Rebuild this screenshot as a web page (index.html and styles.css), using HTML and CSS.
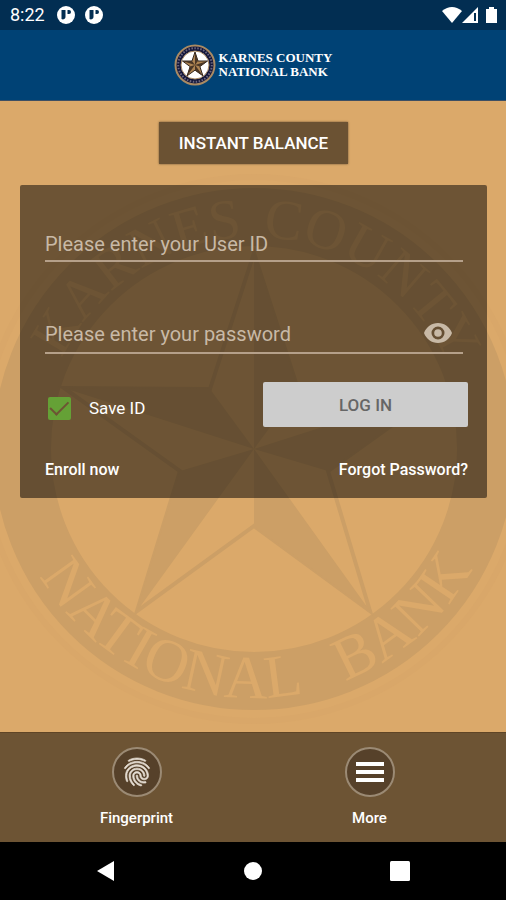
FILE: index.html
```html
<!DOCTYPE html>
<html lang="en">
<head>
<meta charset="utf-8">
<meta name="viewport" content="width=device-width, initial-scale=1">
<title>Karnes County National Bank</title>
<link rel="stylesheet" href="styles.css">
</head>
<body>
<div class="status">
  <div class="status-group">
    <span class="clock">8:22</span>
    <svg class="notice" viewBox="0 0 18 18" aria-hidden="true"><circle cx="9" cy="9" r="9" fill="#fff"/><path d="M4.500 4h4v6.500a2.600 2.600 0 0 1-4 2.500z" fill="#022e52"/><path d="M10.500 4h1.500a2 2 0 0 1 0 4h-1.500z" fill="#022e52"/></svg>
    <svg class="notice" viewBox="0 0 18 18" aria-hidden="true"><circle cx="9" cy="9" r="9" fill="#fff"/><path d="M4.500 4h4v6.500a2.600 2.600 0 0 1-4 2.500z" fill="#022e52"/><path d="M10.500 4h1.500a2 2 0 0 1 0 4h-1.500z" fill="#022e52"/></svg>
  </div>
  <svg class="signals" viewBox="0 0 56 18" aria-hidden="true" fill="#fff">
    <path d="M0 5Q10-3 20 5L10 17z"/>
    <path fill-rule="evenodd" d="M36 1v16H20zM32 7v8h2V7z"/>
    <path d="M47 1h5v2h3v14H44V3h3z"/>
  </svg>
</div>
<header class="header">
  <svg class="emblem" viewBox="0 0 42 42" aria-hidden="true">
    <circle cx="21" cy="21" r="19.500" fill="#14173a" stroke="#a98a63" stroke-width="2"/>
    <circle cx="21" cy="21" r="16.800" fill="none" stroke="#6b6780" stroke-width="2" stroke-dasharray="1.500 1.500"/>
    <circle cx="21" cy="21" r="14" fill="#fff" stroke="#a98a63"/>
    <path d="M21 8l3 9 9.500 0-7.600 5.600 3 9.200-7.900-5.600-7.900 5.600 3-9.200L8.500 17l9.500 0z" fill="#ad8452" stroke="#33271f"/>
    <path d="M21 8v13l3-4zM33.500 17L21 21l4.900 1.600zM28.900 31.800L21 21v5.200zM13.100 31.800L21 21l-4.900 1.600zM8.500 17L21 21l-3-4z" fill="#493626"/>
  </svg>
  <h1 class="brand">KARNES COUNTY<br>NATIONAL BANK</h1>
</header>
<main class="main">
  <svg class="seal" viewBox="0 0 506 631" preserveAspectRatio="xMidYMid slice" aria-hidden="true">
    <defs>
      <path id="arc-top" d="M42 348a212 212 0 0 1 424 0"/>
      <path id="arc-bottom" d="M5 348a249 249 0 0 0 498 0"/>
    </defs>
    <circle class="halo" cx="254" cy="348" r="272"/>
    <circle class="ring" cx="254" cy="348" r="232"/>
    <text class="seal-text" font-size="57"><textPath href="#arc-top" startOffset="14%">KARNES</textPath></text>
    <text class="seal-text seal-end" font-size="57"><textPath href="#arc-top" startOffset="87%">COUNTY</textPath></text>
    <text class="seal-text" font-size="61"><textPath href="#arc-bottom" startOffset="17%">NATIONAL</textPath></text>
    <text class="seal-text seal-end" font-size="61"><textPath href="#arc-bottom" startOffset="84%">BANK</textPath></text>
    <path class="star-line" d="M254 152L298 288L444 287L328 370L370 510L254 425L137 510L180 370L64 287L210 288Z"/>
    <path class="star-dark" d="M254 152V348L298 288zM444 287L254 348L328 370zM370 510L254 348V425zM137 510L254 348L180 370zM64 287L254 348L210 288z"/>
  </svg>
  <button class="instant" type="button">INSTANT BALANCE</button>
  <form class="card">
    <div class="field">
      <input class="text" id="user" type="text" aria-label="User ID" placeholder="Please enter your User ID">
    </div>
    <div class="field field-password">
      <input class="text" id="password" type="password" aria-label="Password" placeholder="Please enter your password">
      <button class="reveal" type="button" aria-label="Show password">
        <svg viewBox="0 0 28 20" aria-hidden="true"><path fill-rule="evenodd" d="M14 0C7.600 0 2.200 4 0 10c2.200 6 7.600 10 14 10s11.800-4 14-10C25.800 4 20.400 0 14 0zm0 16.500a6.500 6.500 0 1 1 0-13 6.500 6.500 0 0 1 0 13zm0-2.700a3.800 3.800 0 1 0 0-7.600 3.800 3.800 0 0 0 0 7.600z" fill="#c8b9a6"/></svg>
      </button>
    </div>
    <div class="actions">
      <label class="save"><input class="tick" type="checkbox" checked>Save ID</label>
      <button class="login" type="button">LOG IN</button>
    </div>
    <div class="links"><a href="#enroll">Enroll now</a><a href="#forgot">Forgot Password?</a></div>
  </form>
</main>
<nav class="tabs">
  <button class="tab" type="button">
    <span class="disc"><svg class="finger" viewBox="2 1.500 20 21" aria-hidden="true" fill="#e5ddd2" stroke="#e5ddd2" stroke-width=".5"><path d="M17.810 4.470c-.080 0-.160-.020-.230-.060C15.660 3.420 14 3 12.010 3c-1.980 0-3.860.470-5.570 1.410-.240.130-.540.040-.680-.200-.130-.240-.040-.550.200-.680C7.820 2.520 9.860 2 12.010 2c2.130 0 3.990.470 6.030 1.520.250.130.340.430.210.670-.090.180-.260.280-.440.280zM3.500 9.720c-.100 0-.200-.030-.290-.090-.230-.160-.280-.470-.120-.700.990-1.400 2.250-2.500 3.750-3.270C9.980 4.040 14 4.030 17.150 5.650c1.500.770 2.760 1.860 3.750 3.250.160.220.110.540-.120.700-.230.160-.540.110-.700-.120-.900-1.260-2.040-2.250-3.390-2.940-2.870-1.470-6.540-1.470-9.400.010-1.360.700-2.500 1.700-3.400 2.960-.080.140-.230.210-.390.210zm6.250 12.070c-.130 0-.260-.050-.350-.150-.870-.870-1.340-1.430-2.010-2.640-.690-1.230-1.050-2.730-1.050-4.340 0-2.970 2.540-5.390 5.660-5.390s5.660 2.420 5.660 5.390c0 .280-.220.500-.500.500s-.500-.220-.500-.500c0-2.420-2.090-4.390-4.660-4.390s-4.660 1.970-4.660 4.390c0 1.440.320 2.770.930 3.850.640 1.150 1.080 1.640 1.850 2.420.190.200.190.510 0 .710-.110.100-.240.150-.370.150zm7.170-1.850c-1.190 0-2.240-.300-3.100-.890-1.490-1.010-2.380-2.650-2.380-4.390 0-.280.220-.500.500-.500s.500.220.500.500c0 1.410.720 2.740 1.940 3.560.710.480 1.540.710 2.540.710.240 0 .640-.030 1.040-.100.270-.050.530.130.580.410.050.270-.130.530-.410.580-.570.110-1.070.120-1.210.120zM14.910 22c-.040 0-.090-.010-.130-.020-1.590-.440-2.630-1.030-3.720-2.100-1.400-1.390-2.170-3.240-2.170-5.220 0-1.620 1.380-2.940 3.080-2.940s3.080 1.320 3.080 2.940c0 1.070.930 1.940 2.080 1.940s2.080-.870 2.080-1.940c0-3.770-3.250-6.830-7.250-6.830-2.840 0-5.440 1.580-6.610 4.030-.390.810-.590 1.760-.590 2.800 0 .780.070 2.010.670 3.610.100.260-.030.550-.290.640-.260.100-.550-.040-.640-.290-.490-1.310-.730-2.610-.730-3.960 0-1.200.230-2.290.680-3.240 1.330-2.790 4.280-4.600 7.510-4.600 4.550 0 8.250 3.510 8.250 7.830 0 1.620-1.380 2.940-3.080 2.940s-3.080-1.320-3.080-2.940c0-1.070-.930-1.940-2.080-1.940s-2.080.870-2.080 1.940c0 1.710.660 3.310 1.870 4.510.950.940 1.860 1.460 3.270 1.850.270.070.420.350.350.610-.050.230-.260.380-.470.380z"/></svg></span>
    Fingerprint
  </button>
  <button class="tab" type="button">
    <span class="disc"><svg class="menu" viewBox="0 0 28 20" aria-hidden="true" fill="#fff"><path d="M0 0h28v4H0zM0 8h28v4H0zM0 16h28v4H0z"/></svg></span>
    More
  </button>
</nav>
<div class="system">
  <button type="button" aria-label="Back"><svg viewBox="0 0 20 22" aria-hidden="true"><path d="M1 11L18 1v20z" fill="#fff"/></svg></button>
  <button type="button" aria-label="Home"><svg viewBox="0 0 20 22" aria-hidden="true"><circle cx="10" cy="11" r="9" fill="#fff"/></svg></button>
  <button type="button" aria-label="Recent apps"><svg viewBox="0 0 20 22" aria-hidden="true"><rect y="1" width="20" height="20" rx="1.500" fill="#fff"/></svg></button>
</div>
</body>
</html>
```
FILE: styles.css
```css
* { box-sizing: border-box; }
body {
  margin: 0;
  min-height: 100vh;
  display: flex;
  flex-direction: column;
  background: #dba96a;
  color: #fff;
  font: 16px/20px Roboto, sans-serif;
}
button { border: 0; padding: 0; background: none; color: inherit; font: inherit; cursor: pointer; }
svg { display: block; }

.status {
  height: 30px;
  padding: 0 8px 0 10px;
  display: flex;
  align-items: center;
  justify-content: space-between;
  background: #022e52;
}
.status-group { display: flex; align-items: center; gap: 10px; }
.clock { font-size: 18px; margin-right: 2px; }
.notice { width: 18px; height: 18px; }
.signals { width: 56px; height: 18px; }

.header {
  height: 71px;
  display: flex;
  align-items: center;
  justify-content: center;
  gap: 3px;
  background: #004275;
  border-bottom: 1px solid #3d4f63;
}
.emblem { width: 42px; height: 42px; }
.brand { margin: 0; font: bold 13px/14px "Liberation Serif", serif; }

.main {
  position: relative;
  flex: 1;
  padding: 21px 19px 24px 20px;
  display: flex;
  flex-direction: column;
  align-items: center;
  gap: 21px;
  overflow: hidden;
}
.seal { position: absolute; inset: 0; width: 100%; height: 100%; }
.halo { fill: none; stroke: #d9a769; stroke-width: 6px; }
.ring { fill: none; stroke: #cc9f66; stroke-width: 58px; }
.seal-text { font-family: "Liberation Serif", serif; fill: #dba96a; }
.seal-end { text-anchor: end; }
.star-line { fill: none; stroke: #cc9f66; stroke-width: 4px; }
.star-dark { fill: #cc9f66; }

.instant {
  position: relative;
  height: 42px;
  padding: 0 20px;
  background: #6b5233;
  box-shadow: 0 0 2px #6b5233;
  font-size: 17px;
  font-weight: 500;
}
.card {
  position: relative;
  width: 100%;
  padding: 41px 19px 19px 25px;
  border-radius: 2px;
  background: rgba(0, 0, 0, .5);
}
.field {
  display: flex;
  align-items: center;
  height: 36px;
  margin-right: 5px;
  border-bottom: 2px solid #b5a08a;
}
.field-password { height: 40px; margin-top: 52px; padding-right: 11px; }
.text {
  flex: 1;
  min-width: 0;
  height: 100%;
  padding: 1px 0 0;
  border: 0;
  outline: 0;
  background: none;
  color: #fff;
  font: 20px/24px Roboto, sans-serif;
}
.text::placeholder { color: #c8b9a6; opacity: 1; }
.reveal svg { width: 28px; height: 20px; }
.actions {
  margin-top: 28px;
  display: grid;
  grid-template-columns: 1fr 205px;
  align-items: center;
}
.save { display: flex; align-items: center; gap: 18px; padding: 7px 0 0 3px; font-size: 17px; }
.tick {
  appearance: none;
  width: 23px;
  height: 23px;
  margin: 0;
  display: grid;
  place-items: center;
  border-radius: 2px;
  background: #65a136;
}
.tick:checked::before {
  content: "";
  width: 16px;
  height: 8px;
  border: solid #6d5434;
  border-width: 0 0 2px 2px;
  transform: rotate(-45deg) translate(1px, -2px);
}
.login {
  height: 45px;
  border-radius: 2px;
  background: #cdcdcd;
  color: #666;
  font-size: 17px;
  font-weight: 500;
}
.links { margin-top: 33px; display: flex; justify-content: space-between; font-weight: 500; }
.links a { color: #fff; text-decoration: none; }
.card { padding-bottom: 18px; }

.tabs {
  height: 110px;
  padding: 0 20px;
  display: grid;
  grid-template-columns: 1fr 1fr;
  align-items: center;
  background: #6d5434;
  border-top: 1px solid #5f4526;
}
.tab { display: flex; flex-direction: column; align-items: center; gap: 11px; font-size: 15px; font-weight: 500; }
.disc {
  width: 50px;
  height: 50px;
  display: grid;
  place-items: center;
  border: 2px solid #9b8a74;
  border-radius: 50%;
  background: #56412a;
}
.finger { width: 28px; height: 30px; }
.menu { width: 28px; height: 20px; }

.system {
  height: 58px;
  padding: 0 33px;
  display: grid;
  grid-template-columns: repeat(3, 1fr);
  align-items: center;
  justify-items: center;
  background: #000;
}
.system svg { width: 20px; height: 22px; }
```
